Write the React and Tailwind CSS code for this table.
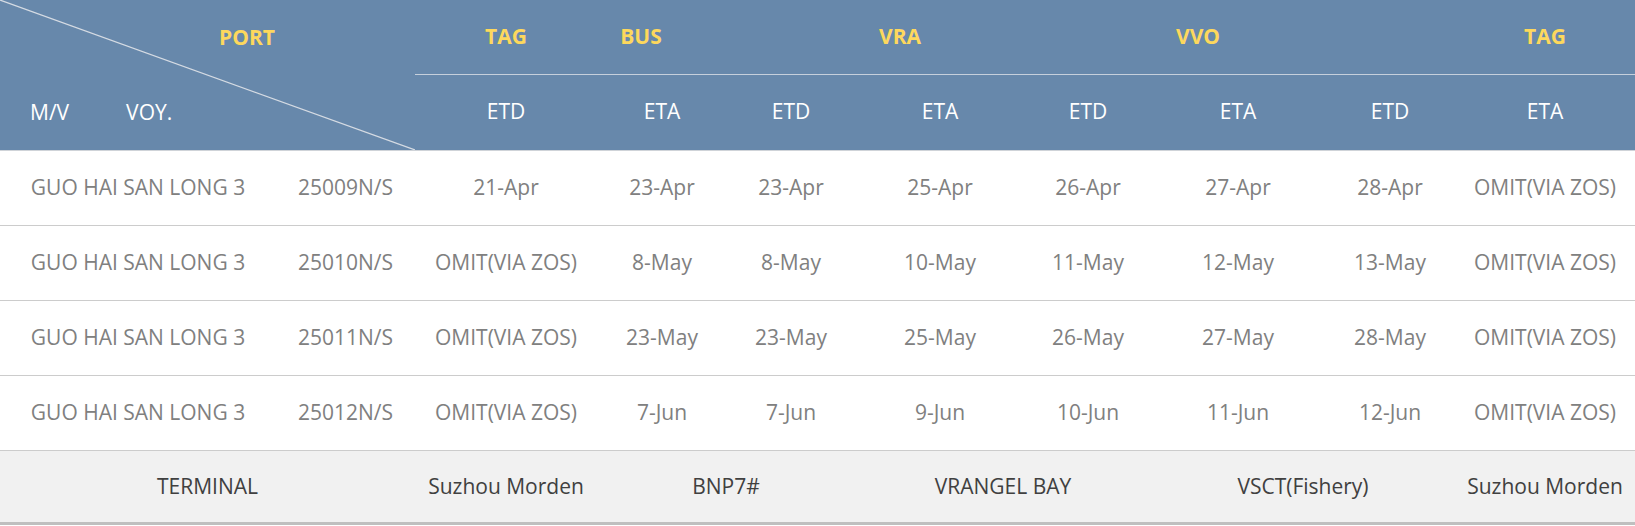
import React from 'react';

const cols = 'grid grid-cols-[276px_139px_182px_130px_128px_170px_126px_174px_130px_180px]';

const rows = [
  ['GUO HAI SAN LONG 3', '25009N/S', '21-Apr', '23-Apr', '23-Apr', '25-Apr', '26-Apr', '27-Apr', '28-Apr', 'OMIT(VIA ZOS)'],
  ['GUO HAI SAN LONG 3', '25010N/S', 'OMIT(VIA ZOS)', '8-May', '8-May', '10-May', '11-May', '12-May', '13-May', 'OMIT(VIA ZOS)'],
  ['GUO HAI SAN LONG 3', '25011N/S', 'OMIT(VIA ZOS)', '23-May', '23-May', '25-May', '26-May', '27-May', '28-May', 'OMIT(VIA ZOS)'],
  ['GUO HAI SAN LONG 3', '25012N/S', 'OMIT(VIA ZOS)', '7-Jun', '7-Jun', '9-Jun', '10-Jun', '11-Jun', '12-Jun', 'OMIT(VIA ZOS)'],
];

const subHeads = ['ETD', 'ETA', 'ETD', 'ETA', 'ETD', 'ETA', 'ETD', 'ETA'];

export default function App() {
  return (
    <div className="w-[1635px] h-[526px] bg-white overflow-hidden font-['Open_Sans',sans-serif] text-[21px]">
      {/* Header */}
      <div className="flex h-[151px] bg-[#6788ab] border-b border-[#cfd3d8]">
        {/* Diagonal cell */}
        <div className="relative w-[415px] h-[150px] flex flex-col">
          <svg className="absolute inset-0" width="415" height="150" viewBox="0 0 415 150">
            <line x1="0" y1="0" x2="415" y2="150" stroke="#d5dbe3" strokeWidth="1.2" />
          </svg>
          <div className="h-[75px] flex items-center pl-[219px]">
            <span className="text-[#fdd85d] font-bold text-[21px]">PORT</span>
          </div>
          <div className="h-[75px] flex items-center pl-[30px] text-white">
            <span>M/V</span>
            <span className="ml-[57px]">VOY.</span>
          </div>
        </div>

        {/* Port columns */}
        <div className="flex flex-col w-[1220px]">
          <div className="h-[75px] flex items-center border-b border-[#c6d0dc] text-[#fdd85d] font-bold text-[21px]">
            <div className="w-[182px] text-center">TAG</div>
            <div className="w-[88px] text-center">BUS</div>
            <div className="w-[430px] text-center">VRA</div>
            <div className="w-[166px] text-center">VVO</div>
            <div className="w-[174px]" />
            <div className="w-[180px] text-center">TAG</div>
          </div>
          <div className="h-[74px] grid grid-cols-[182px_130px_128px_170px_126px_174px_130px_180px] items-center text-white">
            {subHeads.map((h, i) => (
              <div key={i} className="text-center">{h}</div>
            ))}
          </div>
        </div>
      </div>

      {/* Rows */}
      {rows.map((r, i) => (
        <div key={i} className={`${cols} h-[75px] items-center border-b border-[#cccccc] text-[#808080]`}>
          {r.map((c, j) => (
            <div key={j} className="text-center whitespace-nowrap">{c}</div>
          ))}
        </div>
      ))}

      {/* Terminal footer */}
      <div className={`${cols} h-[74px] items-center bg-[#f1f1f1] border-b-[3px] border-[#bfbfbf] text-[#404040]`}>
        <div className="col-span-2 text-center">TERMINAL</div>
        <div className="text-center">Suzhou Morden</div>
        <div className="col-span-2 text-center">BNP7#</div>
        <div className="col-span-2 text-center">VRANGEL BAY</div>
        <div className="col-span-2 text-center">VSCT(Fishery)</div>
        <div className="text-center whitespace-nowrap">Suzhou Morden</div>
      </div>
    </div>
  );
}
